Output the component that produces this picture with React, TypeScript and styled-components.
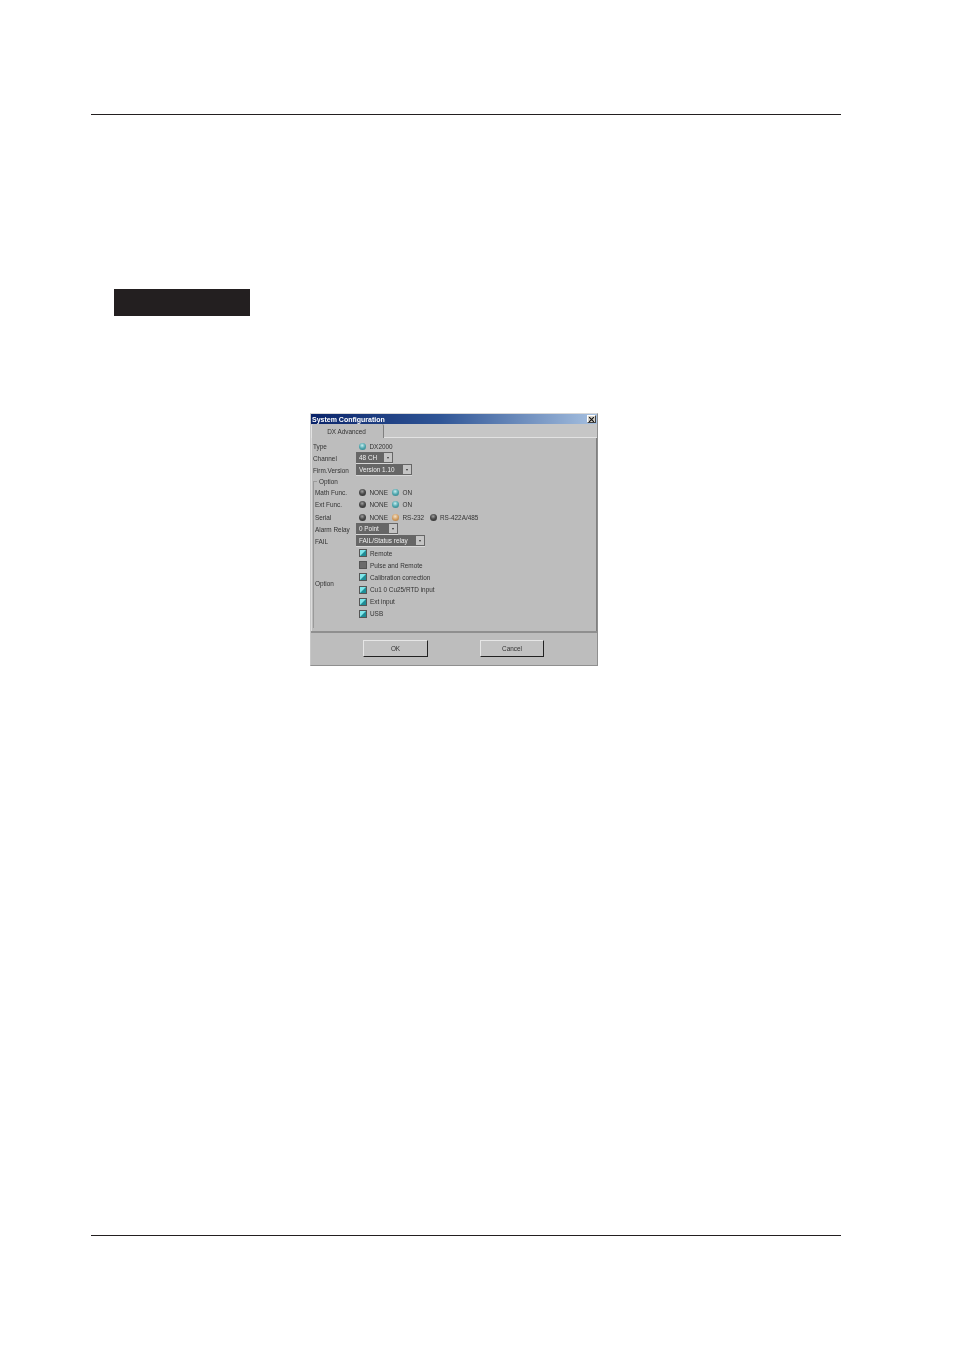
import styled, { createGlobalStyle } from "styled-components";

const GlobalStyle = createGlobalStyle`
  html, body {
    margin: 0;
    padding: 0;
    background: #fff;
  }
`;

const Page = styled.div`
  width: 954px;
  height: 1350px;
  padding-top: 114px;
  box-sizing: border-box;
  overflow: hidden;
  font-family: "Liberation Sans", Arial, sans-serif;
`;

const Rule = styled.hr<{ $gap?: number }>`
  width: 750px;
  height: 1px;
  margin: ${(p) => p.$gap ?? 0}px 0 0 91px;
  border: none;
  background: #231f20;
`;

const Heading = styled.div`
  width: 136px;
  height: 27px;
  margin: 174px 0 0 114px;
  background: #231f20;
`;

const Dialog = styled.div`
  width: 288px;
  height: 253px;
  margin: 97px 0 0 310px;
  box-sizing: border-box;
  display: flex;
  flex-direction: column;
  background: #bdbdbd;
  border: 1px solid #8f8f8f;
  border-top-color: #d8d8d8;
  border-left-color: #c8c8c8;
  color: #333;
  font-size: 6.4px;
  filter: blur(0.35px);
`;

const TitleBar = styled.div`
  height: 10px;
  padding: 0 1px;
  display: flex;
  align-items: center;
  justify-content: space-between;
  background: linear-gradient(90deg, #0a246a 0%, #2f5596 45%, #a6c0e0 100%);
  color: #fff;
  font-size: 7px;
  font-weight: 700;
`;

const CloseBox = styled.span`
  width: 9px;
  height: 8px;
  display: flex;
  align-items: center;
  justify-content: center;
  background: #d4d0c8;
  border: 1px solid;
  box-sizing: border-box;
  border-color: #fff #404040 #404040 #fff;
`;

const TabStrip = styled.div`
  height: 14px;
  display: flex;
  background: #c6c6c6;
  border-bottom: 1px solid #e2e2e2;
  box-sizing: border-box;
`;

const Tab = styled.div`
  width: 73px;
  height: 14px;
  padding: 1px 2px 0 0;
  box-sizing: border-box;
  display: flex;
  align-items: center;
  justify-content: center;
  background: #bdbdbd;
  border-right: 1px solid #808080;
  border-left: 1px solid #e2e2e2;
  border-radius: 2px 2px 0 0;
`;

const Panel = styled.div`
  flex: 1;
  padding: 2px 0 0 1px;
  border-right: 1px solid #808080;
  border-left: 1px solid #dcdcdc;
  display: flex;
  flex-direction: column;
`;

const Row = styled.div<{ $label?: number }>`
  height: 12.1px;
  display: grid;
  grid-template-columns: ${(p) => p.$label ?? 43}px 1fr;
  align-items: center;
  white-space: nowrap;
`;

const Group = styled.div`
  height: 147px;
  margin-top: 5px;
  padding-left: 1px;
  border-left: 1px solid #9a9a9a;
`;

const Legend = styled.div`
  height: 10.5px;
  margin: -5px 0 0 -1px;
  display: flex;
  align-items: center;
  gap: 2px;
  &::before {
    content: "";
    width: 3px;
    height: 1px;
    background: #9a9a9a;
  }
`;

const Options = styled.div`
  display: grid;
  grid-template-columns: 41px 1fr;
  align-items: center;
`;

const ChecksColumn = styled.div`
  padding-left: 3px;
`;

const Choices = styled.div`
  padding-left: 3px;
  display: flex;
  align-items: center;
`;

const Choice = styled.div<{ $width?: number }>`
  width: ${(p) => (p.$width ? `${p.$width}px` : "auto")};
  display: flex;
  align-items: center;
  gap: 3.5px;
`;

const ledColors = {
  off: "radial-gradient(circle at 45% 35%, #a0a0a0 0%, #4a4a4a 45%, #2a2a2a 100%)",
  on: "radial-gradient(circle at 45% 35%, #c8eef0 0%, #4fa6ad 50%, #2c7780 100%)",
  amber: "radial-gradient(circle at 45% 35%, #f2e0c6 0%, #d19a5c 55%, #a0703a 100%)",
};

const Led = styled.span<{ $state: keyof typeof ledColors }>`
  width: 7px;
  height: 7px;
  border-radius: 50%;
  flex-shrink: 0;
  background: ${(p) => ledColors[p.$state]};
`;

const Combo = styled.div<{ $width: number }>`
  width: ${(p) => p.$width}px;
  height: 12px;
  padding: 0 1px 0 3px;
  box-sizing: border-box;
  display: flex;
  align-items: center;
  justify-content: space-between;
  background: #666;
  border-bottom: 1px solid #d8d8d8;
  color: #eee;
`;

const ComboArrow = styled.span`
  width: 8px;
  height: 9px;
  display: flex;
  align-items: center;
  justify-content: center;
  background: #c4c4c4;
  &::after {
    content: "";
    border: 1.5px solid transparent;
    border-top: 2px solid #333;
    border-bottom: 0;
  }
`;

const Check = styled.span<{ $on?: boolean }>`
  width: 8px;
  height: 8px;
  flex-shrink: 0;
  box-sizing: border-box;
  border: 1px solid #555;
  background: ${(p) =>
    p.$on
      ? "linear-gradient(135deg, #7fe6ea 0%, #7fe6ea 45%, #1f8d96 55%, #1f8d96 100%)"
      : "#6b6b6b"};
`;

const Footer = styled.div`
  height: 34px;
  padding: 7px 0 0 52px;
  box-sizing: border-box;
  display: flex;
  gap: 52px;
  border-top: 2px solid #8f8f8f;
  background: #bdbdbd;
`;

const Button = styled.button<{ $width: number }>`
  width: ${(p) => p.$width}px;
  height: 17px;
  padding: 0;
  font: inherit;
  color: inherit;
  background: #c2c2c2;
  border: 1px solid;
  border-color: #e6e6e6 #222 #222 #e6e6e6;
`;

const checks = [
  { label: "Remote", on: true },
  { label: "Pulse and Remote", on: false },
  { label: "Calibration correction", on: true },
  { label: "Cu1 0 Cu25/RTD input", on: true },
  { label: "Ext input", on: true },
  { label: "USB", on: true },
];

export default function App() {
  return (
    <Page>
      <GlobalStyle />
      <Rule />
      <Heading />
      <Dialog>
        <TitleBar>
          System Configuration
          <CloseBox>
            <svg width="5" height="5" viewBox="0 0 5 5">
              <path d="M0 0L5 5M5 0L0 5" stroke="#111" strokeWidth="1.1" />
            </svg>
          </CloseBox>
        </TitleBar>
        <TabStrip>
          <Tab>DX Advanced</Tab>
        </TabStrip>
        <Panel>
          <Row>
            Type
            <Choices>
              <Choice>
                <Led $state="on" />
                DX2000
              </Choice>
            </Choices>
          </Row>
          <Row>
            Channel
            <Combo $width={37}>
              48 CH
              <ComboArrow />
            </Combo>
          </Row>
          <Row>
            Firm.Version
            <Combo $width={56}>
              Version 1.10
              <ComboArrow />
            </Combo>
          </Row>
          <Group>
            <Legend>Option</Legend>
            <Row $label={41}>
              Math Func.
              <Choices>
                <Choice $width={33}>
                  <Led $state="off" />
                  NONE
                </Choice>
                <Choice>
                  <Led $state="on" />
                  ON
                </Choice>
              </Choices>
            </Row>
            <Row $label={41}>
              Ext Func.
              <Choices>
                <Choice $width={33}>
                  <Led $state="off" />
                  NONE
                </Choice>
                <Choice>
                  <Led $state="on" />
                  ON
                </Choice>
              </Choices>
            </Row>
            <Row $label={41}>
              Serial
              <Choices>
                <Choice $width={33}>
                  <Led $state="off" />
                  NONE
                </Choice>
                <Choice $width={37.5}>
                  <Led $state="amber" />
                  RS-232
                </Choice>
                <Choice>
                  <Led $state="off" />
                  RS-422A/485
                </Choice>
              </Choices>
            </Row>
            <Row $label={41}>
              Alarm Relay
              <Combo $width={42}>
                0 Point
                <ComboArrow />
              </Combo>
            </Row>
            <Row $label={41}>
              FAIL
              <Combo $width={69}>
                FAIL/Status relay
                <ComboArrow />
              </Combo>
            </Row>
            <Options>
              Option
              <ChecksColumn>
                {checks.map((c) => (
                  <Row key={c.label} $label={11}>
                    <Check $on={c.on} />
                    {c.label}
                  </Row>
                ))}
              </ChecksColumn>
            </Options>
          </Group>
        </Panel>
        <Footer>
          <Button $width={65}>OK</Button>
          <Button $width={64}>Cancel</Button>
        </Footer>
      </Dialog>
      <Rule $gap={569} />
    </Page>
  );
}
